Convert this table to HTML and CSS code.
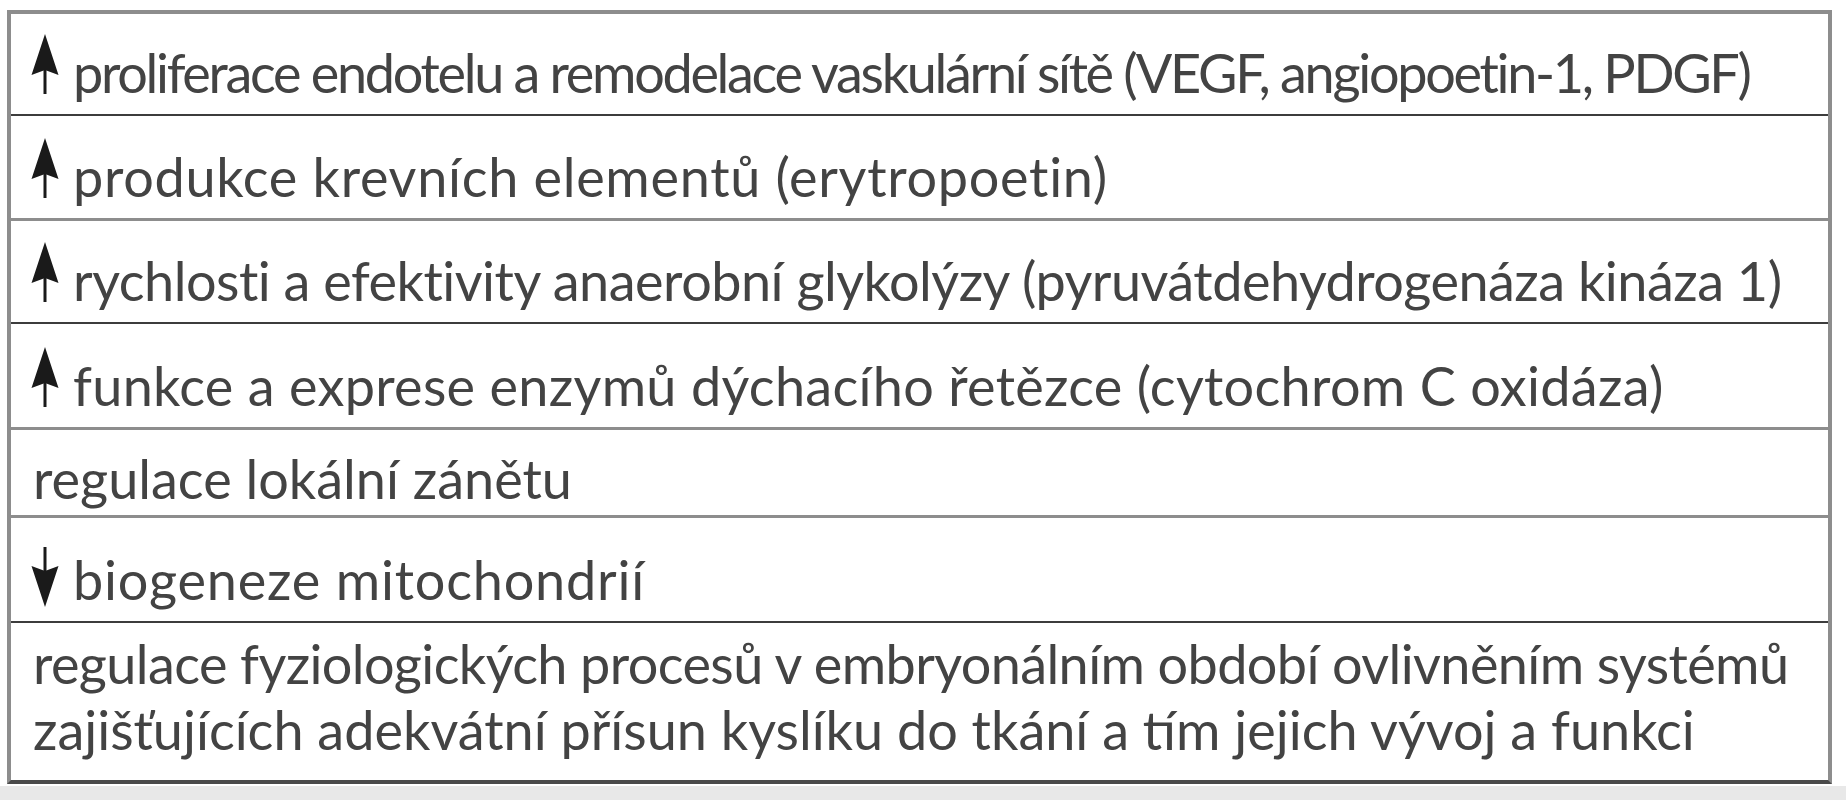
FILE: index.html
```html
<!DOCTYPE html>
<html lang="cs">
<head>
<meta charset="utf-8">
<title>Tabulka</title>
<link rel="stylesheet" href="styles.css">
</head>
<body>
<div class="page">
  <div class="top-gap"></div>
  <div class="table">
    <div class="row r1 line-dark">
      <svg class="arrow" viewBox="0 0 28 60" width="28" height="60"><path d="M14 0 L27.5 41 L14 36 L0.5 41 Z" fill="#1a1a1a"/><rect x="12.5" y="34" width="3" height="26" fill="#1a1a1a"/></svg>
      <span class="txt t1">proliferace endotelu a remodelace vaskulární sítě (VEGF, angiopoetin-1, PDGF)</span>
    </div>
    <div class="row r2 line-grey">
      <svg class="arrow" viewBox="0 0 28 60" width="28" height="60"><path d="M14 0 L27.5 41 L14 36 L0.5 41 Z" fill="#1a1a1a"/><rect x="12.5" y="34" width="3" height="26" fill="#1a1a1a"/></svg>
      <span class="txt t2">produkce krevních elementů (erytropoetin)</span>
    </div>
    <div class="row r3 line-dark">
      <svg class="arrow" viewBox="0 0 28 60" width="28" height="60"><path d="M14 0 L27.5 41 L14 36 L0.5 41 Z" fill="#1a1a1a"/><rect x="12.5" y="34" width="3" height="26" fill="#1a1a1a"/></svg>
      <span class="txt t3">rychlosti a efektivity anaerobní glykolýzy (pyruvátdehydrogenáza kináza 1)</span>
    </div>
    <div class="row r4 line-grey">
      <svg class="arrow" viewBox="0 0 28 60" width="28" height="60"><path d="M14 0 L27.5 41 L14 36 L0.5 41 Z" fill="#1a1a1a"/><rect x="12.5" y="34" width="3" height="26" fill="#1a1a1a"/></svg>
      <span class="txt t4">funkce a exprese enzymů dýchacího řetězce (cytochrom C oxidáza)</span>
    </div>
    <div class="row r5 line-grey">
      <span class="txt plain">regulace lokální zánětu</span>
    </div>
    <div class="row r6 line-dark">
      <svg class="arrow down" viewBox="0 0 28 60" width="28" height="60"><path d="M14 60 L27.5 19 L14 24 L0.5 19 Z" fill="#1a1a1a"/><rect x="12.5" y="0" width="3" height="26" fill="#1a1a1a"/></svg>
      <span class="txt t6">biogeneze mitochondrií</span>
    </div>
    <div class="row r7">
      <div class="multi">
        <span class="txt plain t7a">regulace fyziologických procesů v embryonálním období ovlivněním systémů</span>
        <span class="txt plain">zajišťujících adekvátní přísun kyslíku do tkání a tím jejich vývoj a funkci</span>
      </div>
    </div>
  </div>
  <div class="bottom"></div>
</div>
</body>
</html>
```

FILE: styles.css
```css
html, body {
  margin: 0;
  padding: 0;
  background: #ffffff;
}
.page {
  width: 1846px;
  height: 800px;
  overflow: hidden;
  display: flex;
  flex-direction: column;
}
.top-gap {
  height: 10px;
  flex: none;
}
.table {
  flex: none;
  margin-left: 7px;
  width: 1825px;
  box-sizing: border-box;
  border: 4px solid #8d8d8d;
  border-bottom-color: #4a4a4a;
  background: #ffffff;
  display: flex;
  flex-direction: column;
}
.row {
  flex: none;
  display: flex;
  align-items: flex-end;
  box-sizing: border-box;
  padding-left: 20px;
  font-family: "Lato", "Open Sans", sans-serif;
  font-size: 54px;
  color: #434343;
}
.line-dark { border-bottom: 2px solid #3c3c3c; }
.line-grey { border-bottom: 3px solid #8d8d8d; }
.r1 { height: 102px; padding-bottom: 8px; }
.r2 { height: 105px; padding-bottom: 8px; }
.r3 { height: 103px; padding-bottom: 8px; }
.r4 { height: 106px; padding-bottom: 8px; }
.r5 { height: 88px; padding-bottom: 3px; }
.r6 { height: 105px; padding-bottom: 8px; }
.r7 { height: 157px; padding-bottom: 17px; }
.arrow {
  flex: none;
  margin-right: 14px;
  margin-bottom: 12px;
}
.arrow.down {
  margin-bottom: 6px;
}
.txt {
  line-height: 66px;
  white-space: nowrap;
}
.plain {
  padding-left: 2px;
}
.t1 { letter-spacing: -2.3px; }
.t2 { letter-spacing: 0.7px; }
.t3 { letter-spacing: -0.5px; }
.t4 { letter-spacing: 0.3px; }
.t6 { letter-spacing: 0.8px; }
.t7a { letter-spacing: -0.6px; }
.multi {
  display: flex;
  flex-direction: column;
}
.bottom {
  flex: 1;
  margin-top: 2px;
  background: #e8e8e8;
}
```
